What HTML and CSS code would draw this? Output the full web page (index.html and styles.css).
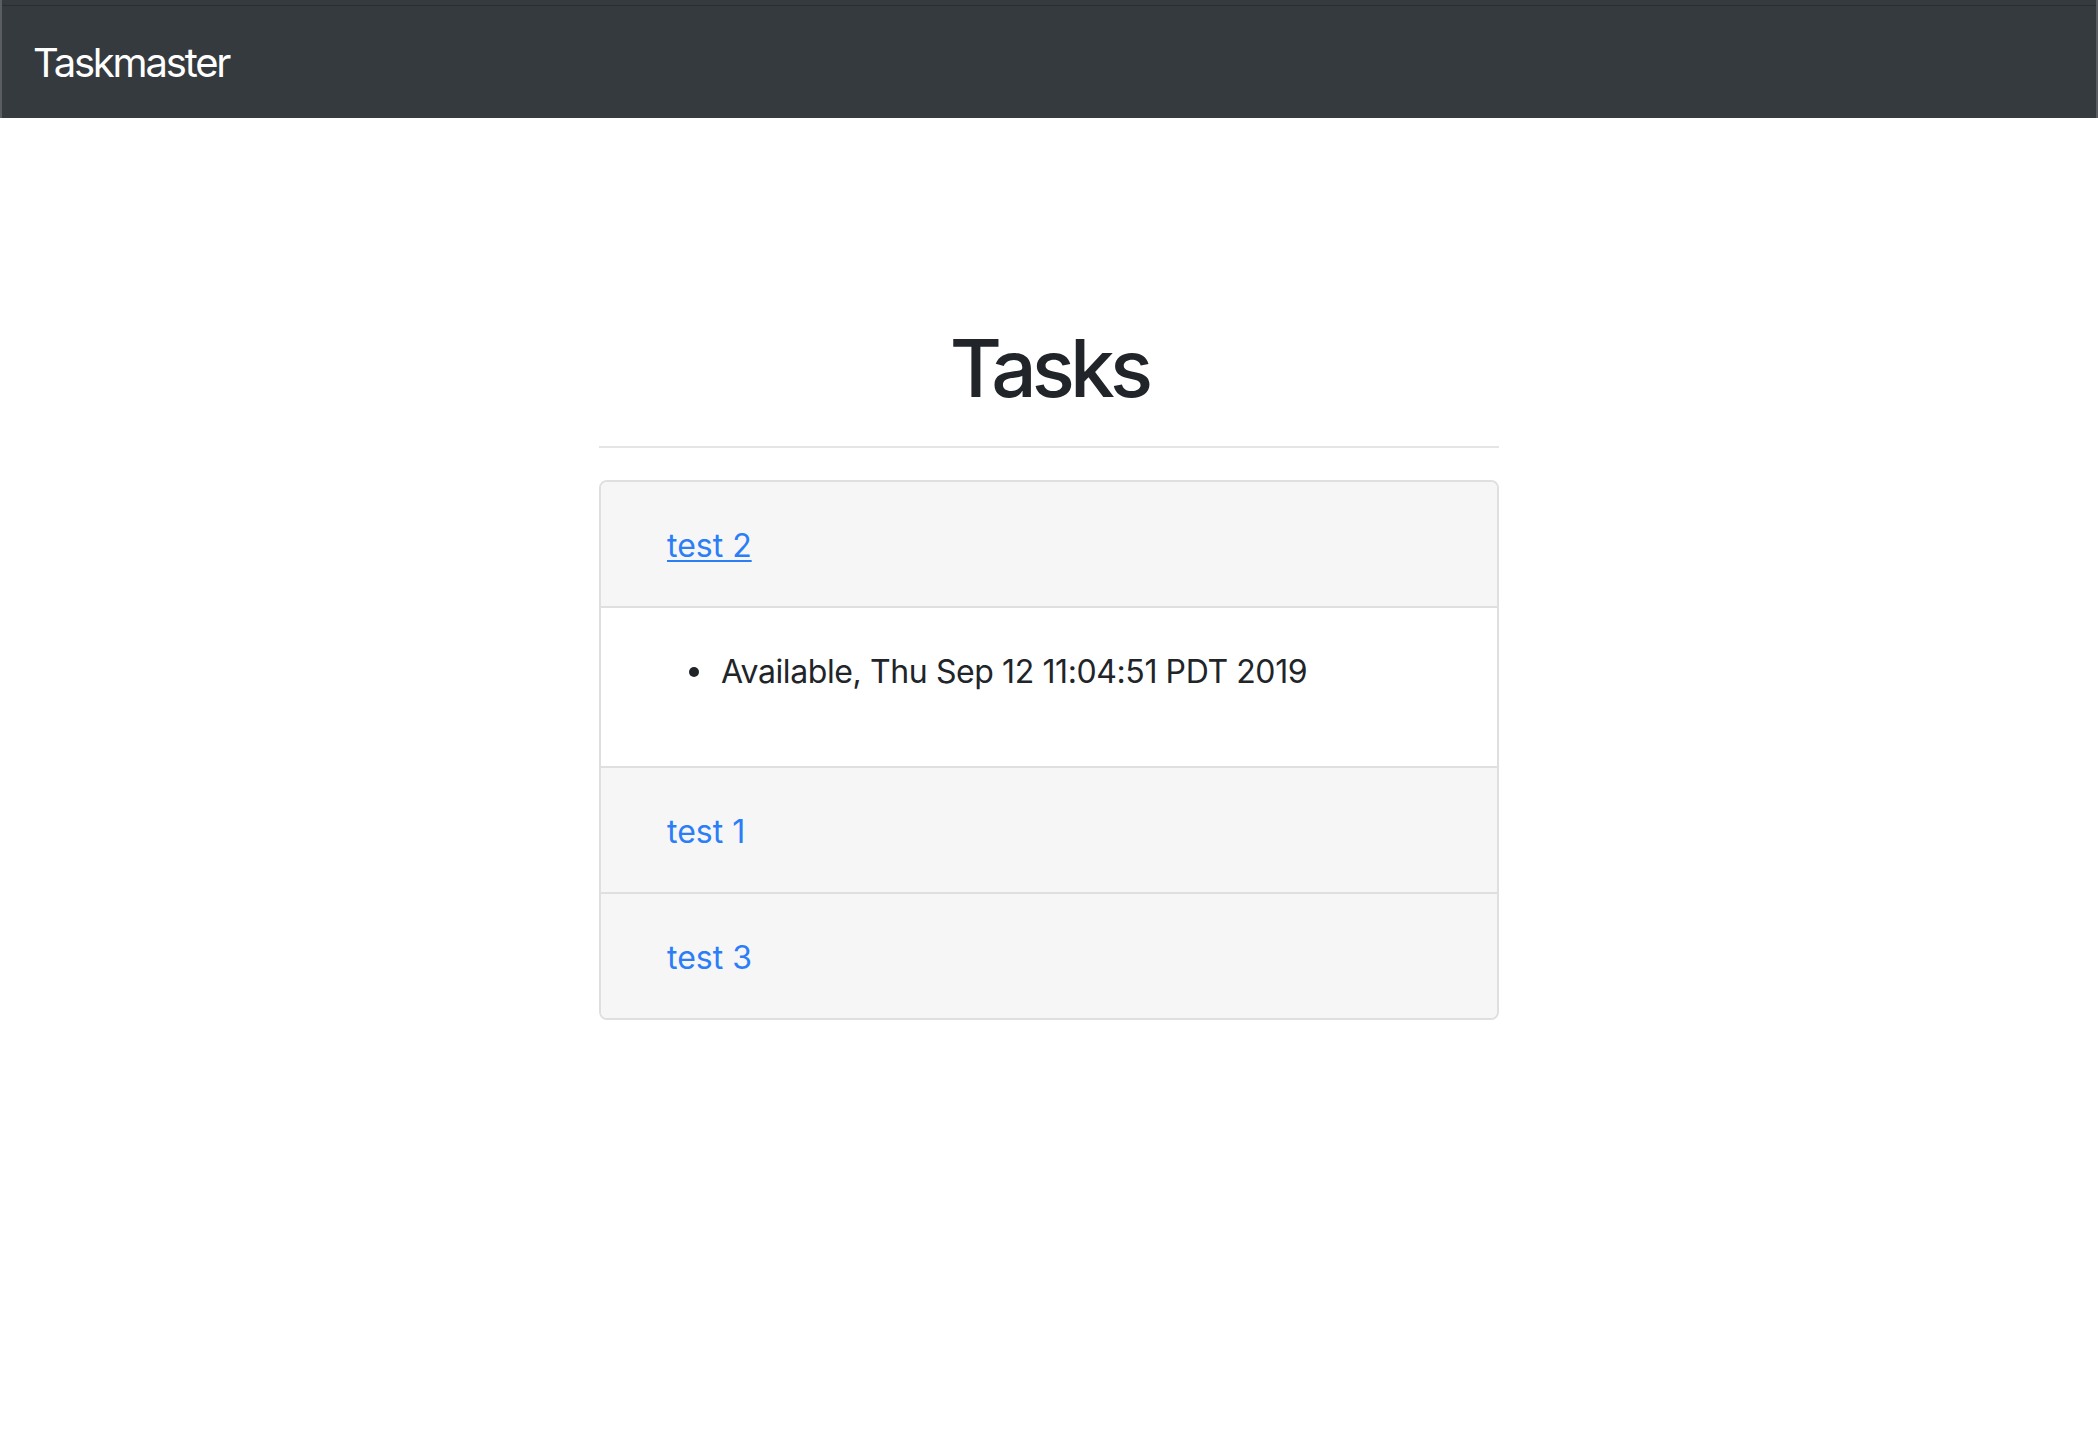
FILE: index.html
```html
<!DOCTYPE html>
<html lang="en">
<head>
<meta charset="utf-8">
<title>Taskmaster</title>
<link rel="stylesheet" href="styles.css">
</head>
<body>
<header class="navbar">
  <div class="navbar-inner">
    <a class="brand" href="#">Taskmaster</a>
  </div>
</header>
<main class="container">
  <h1 class="title">Tasks</h1>
  <hr class="rule">
  <div class="card">
    <div class="row head"><a class="task-link hover" href="#">test 2</a></div>
    <div class="row body">
      <ul class="details">
        <li>Available, Thu Sep 12 11:04:51 PDT 2019</li>
      </ul>
    </div>
    <div class="row head"><a class="task-link" href="#">test 1</a></div>
    <div class="row head last"><a class="task-link" href="#">test 3</a></div>
  </div>
</main>
</body>
</html>
```
FILE: styles.css
```css
html, body {
  margin: 0;
  padding: 0;
  background: #ffffff;
}
body {
  font-family: Inter, "Noto Sans", "Liberation Sans", sans-serif;
  color: #212529;
  font-size: 32px;
  line-height: 48px;
}
.navbar {
  background: #353a3f;
  padding-top: 5px;
  border-left: 2px solid #5a5e63;
  border-right: 2px solid #5a5e63;
}
.navbar-inner {
  border-top: 1px solid #2a2e32;
  height: 112px;
  display: flex;
  align-items: center;
  padding: 0 31px;
}
.brand {
  color: #ffffff;
  text-decoration: none;
  font-size: 40px;
  line-height: 60px;
  letter-spacing: -2.2px;
  margin-top: 2px;
}
.container {
  width: 900px;
  margin: 0 auto;
  padding-top: 202px;
}
.title {
  margin: 0 0 30px;
  text-align: center;
  font-size: 80px;
  line-height: 96px;
  font-weight: 500;
  letter-spacing: -4.8px;
}
.rule {
  margin: 0 0 32px;
  border: 0;
  border-top: 2px solid #e5e5e5;
  height: 0;
}
.card {
  border: 2px solid #dfdfdf;
  border-radius: 8px;
  overflow: hidden;
}
.row {
  border-bottom: 2px solid #dfdfdf;
  padding: 40px 66px 36px;
}
.row.last {
  border-bottom: 0;
}
.head {
  background: #f6f6f6;
}
.body {
  background: #ffffff;
  padding-bottom: 38px;
}
.task-link {
  color: #2b7ef6;
  text-decoration: none;
}
.task-link.hover {
  text-decoration: underline;
  text-decoration-thickness: 2px;
  text-underline-offset: 3px;
}
.details {
  margin: 0 0 32px;
  padding-left: 54px;
  list-style: none;
}
.details li {
  letter-spacing: -0.4px;
}
.details li::before {
  content: "";
  display: inline-block;
  width: 10px;
  height: 10px;
  border-radius: 50%;
  background: #212529;
  margin-left: -32px;
  margin-right: 22px;
  vertical-align: 6px;
}
```
